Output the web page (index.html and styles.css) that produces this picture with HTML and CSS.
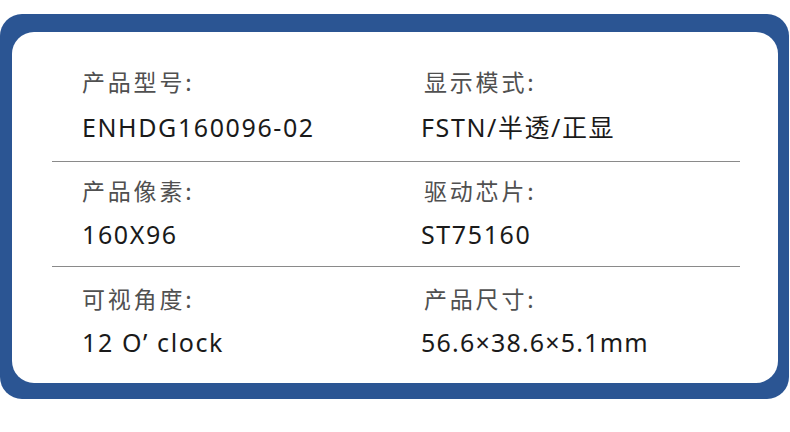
FILE: index.html
```html
<!DOCTYPE html>
<html lang="zh">
<head>
<meta charset="utf-8">
<link rel="stylesheet" href="styles.css">
</head>
<body>
<div class="frame">
  <div class="card">
    <div class="row row-1">
      <div class="cell"><div class="label">产品型号:</div><div class="value">ENHDG160096-02</div></div>
      <div class="cell"><div class="label">显示模式:</div><div class="value">FSTN/半透/正显</div></div>
    </div>
    <div class="row row-2">
      <div class="cell"><div class="label">产品像素:</div><div class="value">160X96</div></div>
      <div class="cell"><div class="label">驱动芯片:</div><div class="value">ST75160</div></div>
    </div>
    <div class="row row-3">
      <div class="cell"><div class="label">可视角度:</div><div class="value">12 O’ clock</div></div>
      <div class="cell"><div class="label">产品尺寸:</div><div class="value value-tight">56.6×38.6×5.1mm</div></div>
    </div>
  </div>
</div>
</body>
</html>
```
FILE: styles.css
```css
* { box-sizing: border-box; }
html, body { margin: 0; padding: 0; background: #ffffff; }
body {
  width: 790px;
  height: 432px;
  font-family: "Noto Sans CJK SC", "Noto Sans", sans-serif;
  padding-top: 14px;
}
.frame {
  width: 789px;
  height: 385px;
  background: #2b5593;
  border-radius: 22px;
  padding: 18px 11px 16px 12px;
}
.card {
  height: 100%;
  background: #ffffff;
  border-radius: 22px;
  padding: 0 38px 0 40px;
}
.row {
  display: grid;
  grid-template-columns: 339px 1fr;
  padding-left: 30px;
}
.row-1 { height: 130px; padding-top: 34px; border-bottom: 1px solid #8a8a8a; }
.row-2 { height: 105px; padding-top: 13px; border-bottom: 1px solid #8a8a8a; }
.row-3 { padding-top: 16px; }
.cell:nth-child(2) .label { padding-left: 3px; }
.label {
  font-size: 23px;
  line-height: 30px;
  letter-spacing: 2.8px;
  color: #505050;
}
.value {
  margin-top: 14px;
  font-family: "Noto Sans", "Noto Sans CJK SC", sans-serif;
  font-size: 25px;
  line-height: 30px;
  letter-spacing: 1.6px;
  color: #1a1a1a;
}
.value-tight { letter-spacing: 1.2px; }
.row-1 .value { margin-top: 16px; }
```
